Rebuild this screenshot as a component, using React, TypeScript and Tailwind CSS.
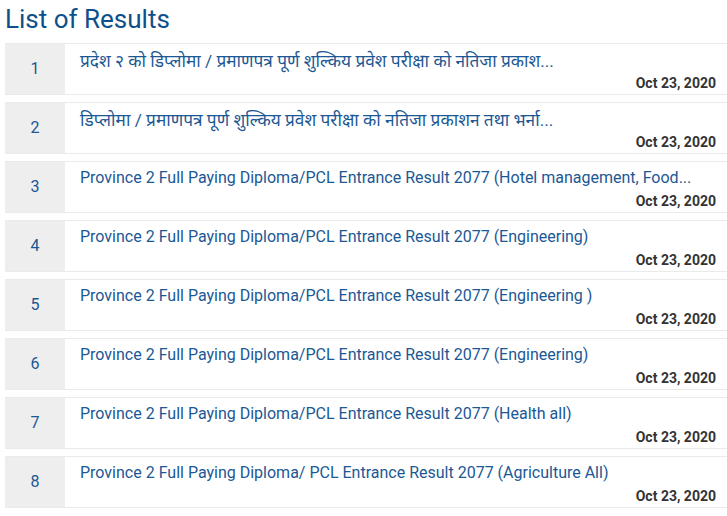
import React from "react";

const rows = [
  { t: "प्रदेश २ को डिप्लोमा / प्रमाणपत्र पूर्ण शुल्किय प्रवेश परीक्षा को नतिजा प्रकाश...", np: true },
  { t: "डिप्लोमा / प्रमाणपत्र पूर्ण शुल्किय प्रवेश परीक्षा को नतिजा प्रकाशन तथा भर्ना...", np: true },
  { t: "Province 2 Full Paying Diploma/PCL Entrance Result 2077 (Hotel management, Food...", np: false },
  { t: "Province 2 Full Paying Diploma/PCL Entrance Result 2077 (Engineering)", np: false },
  { t: "Province 2 Full Paying Diploma/PCL Entrance Result 2077 (Engineering )", np: false },
  { t: "Province 2 Full Paying Diploma/PCL Entrance Result 2077 (Engineering)", np: false },
  { t: "Province 2 Full Paying Diploma/PCL Entrance Result 2077 (Health all)", np: false },
  { t: "Province 2 Full Paying Diploma/ PCL Entrance Result 2077 (Agriculture All)", np: false },
];

export default function App() {
  return (
    <div
      className="w-[727px] h-[516px] overflow-hidden bg-white pl-[5px]"
      style={{ fontFamily: "Roboto, 'Noto Sans', sans-serif" }}
    >
      <h1 className="text-[26px] leading-[38px] text-[#0e4f8c] font-normal">List of Results</h1>
      <div className="mt-[5px] flex flex-col gap-[7px] w-[740px]">
        {rows.map((r, i) => (
          <div key={i} className="flex border-y border-[#eaeaea] h-[52px]">
            <div className="w-[60px] bg-[#eeeeee] flex items-center justify-center text-[16px] text-[#1b5894]">
              {i + 1}
            </div>
            <div className="flex-1 flex flex-col pl-[15px] pr-[29px] pt-[4px]">
              <div
                className={
                  r.np
                    ? "text-[17.3px] leading-[24px] text-[#1b5894] whitespace-nowrap pt-[1px]"
                    : "text-[16px] leading-[24px] text-[#1b5894] whitespace-nowrap"
                }
              >
                {r.t}
              </div>
              <div className={r.np ? "text-right text-[14px] leading-[20px] font-bold text-[#333333]" : "text-right text-[14px] leading-[20px] font-bold text-[#333333] mt-[1px]"}>
                Oct 23, 2020
              </div>
            </div>
          </div>
        ))}
      </div>
    </div>
  );
}
